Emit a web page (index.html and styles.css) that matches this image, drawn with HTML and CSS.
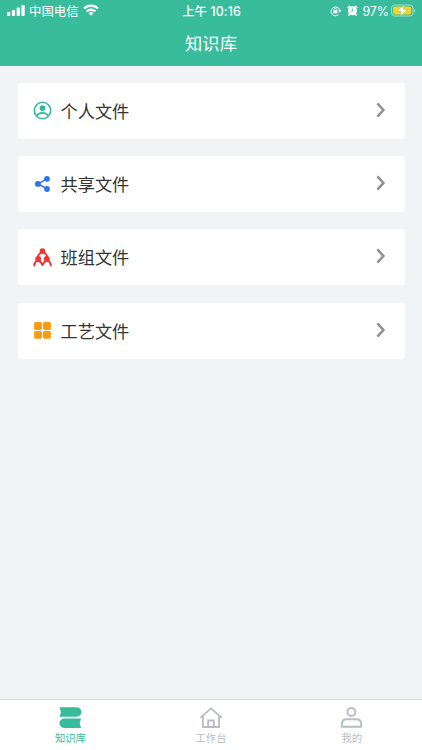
FILE: index.html
```html
<!DOCTYPE html>
<html lang="zh-CN">
<head>
    <meta charset="UTF-8">
    <meta name="viewport" content="width=device-width, initial-scale=1.0">
    <title>知识库</title>
    <link rel="stylesheet" href="styles.css">
</head>
<body>
    <div class="app">
        <header class="header">
            <div class="status-bar">
                <div class="status-left">
                    <svg class="signal" width="18" height="11" viewBox="0 0 18 11" fill="currentColor">
                        <rect x="0" y="7" width="3.3" height="4" rx="1"/>
                        <rect x="4.8" y="5" width="3.3" height="6" rx="1"/>
                        <rect x="9.6" y="2.6" width="3.3" height="8.4" rx="1"/>
                        <rect x="14.4" y="0" width="3.3" height="11" rx="1"/>
                    </svg>
                    <span class="carrier">中国电信</span>
                    <svg class="wifi" width="16" height="12" viewBox="0 0 16 12" fill="none" stroke="currentColor" stroke-width="2.3">
                        <path d="M1.1 4.5a9.8 9.8 0 0 1 13.8 0"/>
                        <path d="M3.7 7.5a6.1 6.1 0 0 1 8.6 0"/>
                        <path d="M8 11.7L5.5 9.2a3.5 3.5 0 0 1 5 0z" fill="currentColor" stroke="none"/>
                    </svg>
                </div>
                <div class="status-time">上午 10:16</div>
                <div class="status-right">
                    <svg class="lock" width="12" height="12" viewBox="0 0 12 12" fill="none" stroke="currentColor">
                        <path d="M8.9 9.2A4.4 4.4 0 1 1 9.7 5"/>
                        <path d="M8 5.2h3.6L9.8 7.6z" fill="currentColor" stroke="none"/>
                        <rect x="3.4" y="5.3" width="4" height="3" fill="currentColor" stroke="none"/>
                        <path d="M4.2 5.4V4.5a1.2 1.2 0 0 1 2.4 0v.9" stroke-width=".8"/>
                    </svg>
                    <svg class="alarm" width="11" height="11" viewBox="0 0 11 11">
                        <circle cx="5.5" cy="5.8" r="4.5" fill="currentColor"/>
                        <path d="M.8 3L3 .9M10.2 3L8 .9M2.5 9.3l-1 1.2M8.5 9.3l1 1.2" stroke="currentColor" stroke-width="1.7"/>
                        <path d="M5.5 3.4v2.7H3.7" fill="none" stroke="#38bc9c" stroke-width=".8"/>
                    </svg>
                    <span class="percent">97%</span>
                    <svg class="battery" width="25" height="13" viewBox="0 0 25 13">
                        <rect x=".6" y="1" width="21.4" height="11" rx="3" fill="none" stroke="#a3dfcf"/>
                        <rect x="2.2" y="2.6" width="18" height="7.8" rx="1.6" fill="#f5d521"/>
                        <path d="M23.2 4.8v3.4q1.2-.5 1.2-1.7t-1.2-1.7z" fill="#a3dfcf"/>
                        <path d="M13 .7L6.2 7.3h4L9 12.2 16.4 5.6h-4z" fill="#fff" stroke="#38bc9c" stroke-width=".4"/>
                    </svg>
                </div>
            </div>
            <h1 class="title">知识库</h1>
        </header>

        <main class="list">
            <a class="card">
                <svg class="card-icon" width="19" height="19" viewBox="0 0 19 19" fill="none" stroke="#35b999" stroke-width="1.6">
                    <circle cx="9.5" cy="9.5" r="8.2"/>
                    <circle cx="9.5" cy="7.1" r="2.9" fill="#35b999" stroke="none"/>
                    <path d="M3.7 15.1c1.2-2.2 3.3-3.2 5.8-3.2s4.6 1 5.8 3.2"/>
                </svg>
                <span class="card-title">个人文件</span>
                <svg class="arrow" width="10" height="18" viewBox="0 0 10 18"><path d="M1.4 2.3L7.4 9l-6 6.7"/></svg>
            </a>
            <a class="card">
                <svg class="card-icon" width="19" height="19" viewBox="0 0 19 19" fill="#2e74ed">
                    <path d="M14 3.9L5 8.9l9 5" fill="none" stroke="#2e74ed" stroke-width="1.5"/>
                    <circle cx="14" cy="3.8" r="2.9"/>
                    <circle cx="4.9" cy="8.9" r="2.9"/>
                    <circle cx="14" cy="14" r="2.9"/>
                </svg>
                <span class="card-title">共享文件</span>
                <svg class="arrow" width="10" height="18" viewBox="0 0 10 18"><path d="M1.4 2.3L7.4 9l-6 6.7"/></svg>
            </a>
            <a class="card">
                <svg class="card-icon" width="19" height="19" viewBox="0 0 19 19" fill="#f03535">
                    <circle cx="9.5" cy="3.1" r="2.9"/>
                    <circle cx="5.2" cy="11" r="3"/>
                    <circle cx="13.8" cy="11" r="3"/>
                    <g fill="none" stroke="#f03535" stroke-width="1.9" stroke-linecap="round">
                        <path d="M7.8 4.7C5.9 5.9 4.9 7.5 4.7 9.5M11.2 4.7c1.9 1.2 2.9 2.8 3.1 4.8"/>
                        <path d="M1.2 17.5c0-2.3 1.1-4 3.2-4.8M6.2 13c1.9.8 2.8 2.5 3.3 4.5.5-2 1.4-3.7 3.3-4.5M14.6 12.7c2.1.8 3.2 2.5 3.2 4.8"/>
                    </g>
                </svg>
                <span class="card-title">班组文件</span>
                <svg class="arrow" width="10" height="18" viewBox="0 0 10 18"><path d="M1.4 2.3L7.4 9l-6 6.7"/></svg>
            </a>
            <a class="card">
                <svg class="card-icon" width="19" height="19" viewBox="0 0 19 19" fill="#fb9a0c">
                    <rect x="1.1" y="1" width="7.9" height="7.9" rx="1.7"/>
                    <rect x="10" y="1" width="7.9" height="7.9" rx="1.7"/>
                    <rect x="1.1" y="9.9" width="7.9" height="7.9" rx="1.7"/>
                    <rect x="10" y="9.9" width="7.9" height="7.9" rx="1.7"/>
                </svg>
                <span class="card-title">工艺文件</span>
                <svg class="arrow" width="10" height="18" viewBox="0 0 10 18"><path d="M1.4 2.3L7.4 9l-6 6.7"/></svg>
            </a>
        </main>

        <nav class="tab-bar">
            <a class="tab active">
                <svg width="24" height="24" viewBox="0 0 24 24" fill="currentColor">
                    <path d="M2 1.3h16.8a4.6 4.6 0 0 1 0 9.4H2q-.8-.4-.2-1.2 2-3.5 0-7-.5-.9.2-1.2z"/>
                    <path d="M22.6 12.6H6.1a4.7 4.7 0 0 0 0 9.4h16.5q.8-.4.2-1.2-2-3.5 0-7 .5-.9-.2-1.2z"/>
                </svg>
                <span>知识库</span>
            </a>
            <a class="tab">
                <svg width="24" height="24" viewBox="0 0 24 24" fill="none" stroke="currentColor" stroke-width="1.8">
                    <path d="M1.2 11.9L12 2.4l10.8 9.5M3.9 10v11h16.2V10"/>
                    <path d="M9.2 21v-6.5h5.6V21"/>
                </svg>
                <span>工作台</span>
            </a>
            <a class="tab">
                <svg width="24" height="24" viewBox="0 0 24 24" fill="none" stroke="currentColor" stroke-width="1.9">
                    <circle cx="11.4" cy="6" r="4"/>
                    <path d="M1.8 20.8v-2.6q0-4.9 4.9-4.9h9.6q4.9 0 4.9 4.9v2.6z" stroke-linejoin="round"/>
                </svg>
                <span>我的</span>
            </a>
        </nav>
    </div>
</body>
</html>
```
FILE: styles.css
```css
* {
    margin: 0;
    padding: 0;
    box-sizing: border-box;
}

body {
    font-family: Inter, "Noto Sans CJK SC", sans-serif;
    background: #f2f3f5;
    color: #333;
}

svg {
    display: block;
    flex: none;
}

.app {
    height: 100vh;
    display: flex;
    flex-direction: column;
}

.header {
    height: 65.5px;
    background: #38bc9c;
    color: #fff;
}

.status-bar {
    height: 22px;
    display: grid;
    grid-template-columns: 1fr auto 1fr;
    align-items: center;
    padding: 0 6px 0 7px;
    font-size: 12.4px;
    line-height: 20px;
}

.status-left,
.status-right {
    display: flex;
    align-items: center;
}

.signal {
    margin-bottom: 1px;
}

.carrier {
    margin: 0 4px 0 4px;
    padding-top: 2px;
}

.wifi {
    margin-bottom: 2px;
}

.status-time {
    padding-top: 2px;
    font-weight: 500;
    letter-spacing: 0.1px;
}

.status-right {
    justify-content: flex-end;
}

.alarm {
    margin: 0 4px 1px 5px;
}

.percent {
    margin-right: 2px;
    padding-top: 1px;
}

.battery {
    margin-bottom: 1px;
}

.title {
    font-size: 17.3px;
    font-weight: 400;
    line-height: 43px;
    text-align: center;
}

.list {
    flex: 1;
    display: flex;
    flex-direction: column;
    gap: 17.3px;
    padding: 17.3px 17.5px;
}

.card {
    height: 56px;
    display: flex;
    align-items: center;
    padding: 0 19px 0 15.5px;
    background: #fff;
    border-radius: 4px;
}

.card-title {
    flex: 1;
    margin-left: 8.5px;
    padding-top: 2px;
    font-size: 17.2px;
    line-height: 24px;
}

.arrow {
    fill: none;
    stroke: #8f8f94;
    stroke-width: 2.5;
    margin-bottom: 2px;
}

.tab-bar {
    height: 51.5px;
    display: flex;
    background: #fff;
    border-top: 1px solid #d9dade;
}

.tab {
    flex: 1;
    display: flex;
    flex-direction: column;
    align-items: center;
    padding-top: 6px;
    color: #b9bcc3;
    font-size: 10.3px;
    line-height: 16px;
}

.tab.active {
    color: #38bc9c;
}
```
